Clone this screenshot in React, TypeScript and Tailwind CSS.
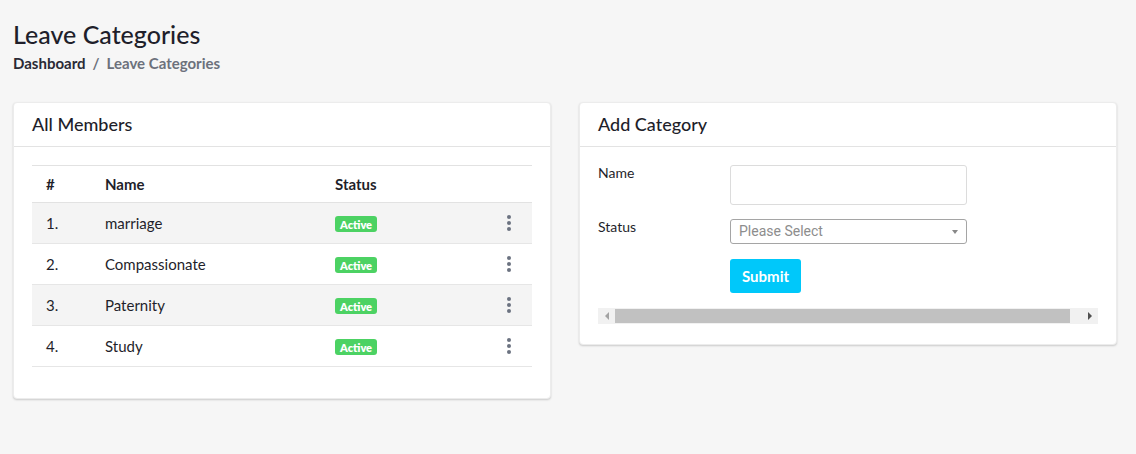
const rows = [
  { no: "1.", name: "marriage" },
  { no: "2.", name: "Compassionate" },
  { no: "3.", name: "Paternity" },
  { no: "4.", name: "Study" },
];

const Dots = () => (
  <span className="flex flex-col items-center gap-[2px]">
    <span className="w-[4px] h-[4px] rounded-full bg-[#6b7280]" />
    <span className="w-[4px] h-[4px] rounded-full bg-[#6b7280]" />
    <span className="w-[4px] h-[4px] rounded-full bg-[#6b7280]" />
  </span>
);

const Badge = () => (
  <span className="inline-flex items-center h-[16px] px-[5px] rounded-[3px] bg-[#4cd263] text-white text-[11px] font-extrabold leading-none">
    Active
  </span>
);

const Card = ({ title, children }: { title: string; children: React.ReactNode }) => (
  <div className="bg-white rounded-[4px] border border-[#ececec] shadow-[0_1px_2px_rgba(0,0,0,0.18)]">
    <div className="h-[44px] flex items-center px-[18px] border-b border-[#e3e3e3]">
      <h4 className="text-[18px] font-medium text-[#1e1e2a]">{title}</h4>
    </div>
    {children}
  </div>
);

export default function App() {
  return (
    <div className="min-h-[454px] bg-[#f6f6f6] pl-[13px] pr-[19px] pt-[19px] text-[#1f1f2b] font-['Lato','Liberation_Sans',sans-serif]">
      <h2 className="text-[25px] font-medium leading-[30px]">Leave Categories</h2>
      <div className="mt-[5px] text-[15px] font-bold leading-[18px]">
        <span className="text-[#2a2a35]">Dashboard</span>
        <span className="text-[#6c717c] mx-[7px]">/</span>
        <span className="text-[#6c717c]">Leave Categories</span>
      </div>

      <div className="grid grid-cols-2 gap-[28px] mt-[30px] items-start">
        <Card title="All Members">
          <div className="px-[18px] pt-[18px] pb-[31px]">
            <table className="w-full text-[15px] border-collapse">
              <thead>
                <tr className="h-[37px] border-t border-b border-[#e2e2e2] text-left">
                  <th className="pl-[14px] w-[73px] font-bold">#</th>
                  <th className="w-[230px] font-bold">Name</th>
                  <th className="font-bold">Status</th>
                  <th className="w-[46px]" />
                </tr>
              </thead>
              <tbody>
                {rows.map((r, i) => (
                  <tr
                    key={r.no}
                    className={`h-[41px] border-b border-[#e6e6e6] ${i % 2 === 0 ? "bg-[#f4f4f4]" : "bg-white"}`}
                  >
                    <td className="pl-[14px]">{r.no}</td>
                    <td>{r.name}</td>
                    <td>
                      <Badge />
                    </td>
                    <td>
                      <Dots />
                    </td>
                  </tr>
                ))}
              </tbody>
            </table>
          </div>
        </Card>

        <Card title="Add Category">
          <div className="px-[18px] pt-[18px] pb-[20px] text-[14px]">
            <div className="flex">
              <label className="w-[132px] leading-[18px] -mt-[1px]">Name</label>
              <input className="w-[237px] h-[40px] border border-[#dcdcdc] rounded-[3px] bg-white" />
            </div>
            <div className="flex mt-[14px]">
              <label className="w-[132px] leading-[18px] -mt-[1px]">Status</label>
              <div className="w-[237px] h-[25px] border border-[#a5a5a5] rounded-[3px] flex items-center justify-between px-[8px] font-['Roboto',sans-serif] text-[#8d8d8d] text-[14px]">
                <span>Please Select</span>
                <span className="w-0 h-0 border-l-[3px] border-r-[3px] border-t-[4px] border-l-transparent border-r-transparent border-t-[#888]" />
              </div>
            </div>
            <div className="mt-[15px] pl-[132px]">
              <button className="h-[34px] px-[12px] rounded-[3px] bg-[#00c8fa] text-white text-[15px] font-bold">
                Submit
              </button>
            </div>
            <div className="mt-[15px] h-[16px] bg-[#f1f1f1] flex items-center">
              <span className="w-[17px] flex justify-center">
                <span className="w-0 h-0 border-t-[4px] border-b-[4px] border-r-[4px] border-t-transparent border-b-transparent border-r-[#a3a3a3]" />
              </span>
              <span className="h-[14px] w-[455px] bg-[#c1c1c1]" />
              <span className="flex-1" />
              <span className="w-[17px] flex justify-center">
                <span className="w-0 h-0 border-t-[4px] border-b-[4px] border-l-[4px] border-t-transparent border-b-transparent border-l-[#505050]" />
              </span>
            </div>
          </div>
        </Card>
      </div>
    </div>
  );
}
